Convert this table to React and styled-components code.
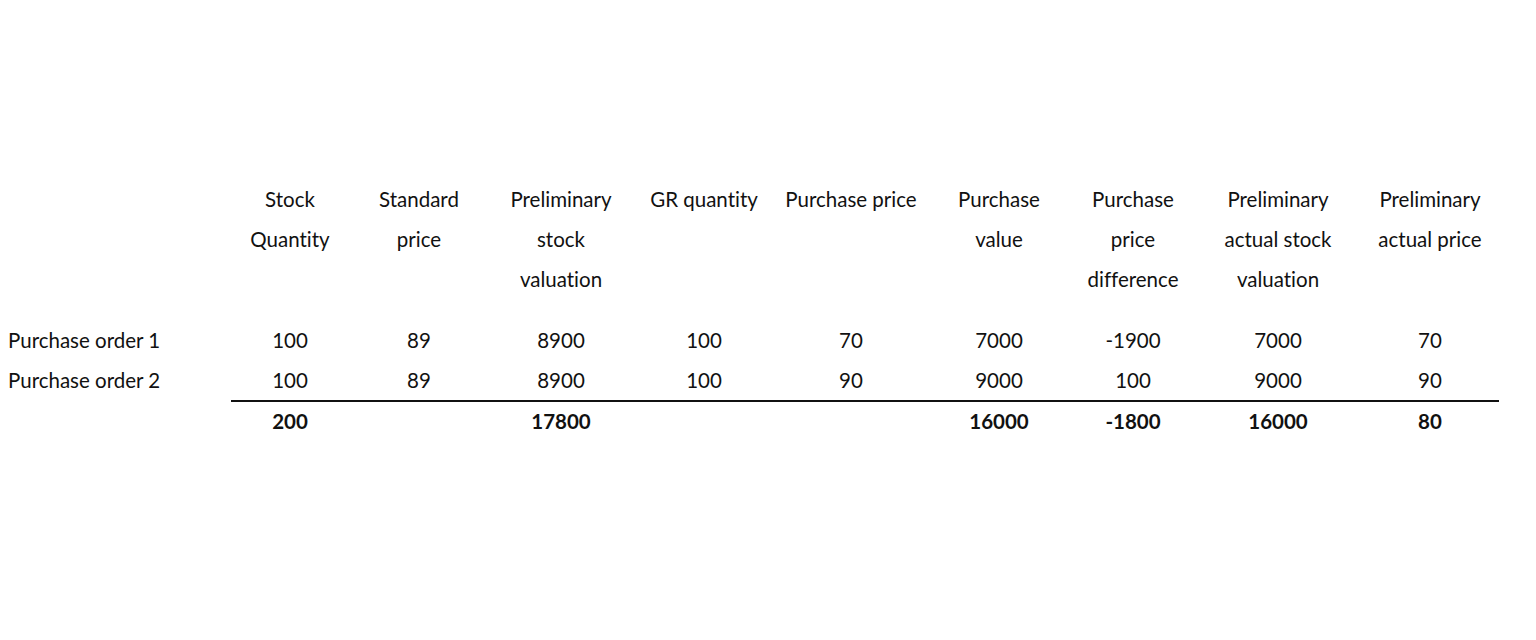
import React from 'react';
import styled, { createGlobalStyle } from 'styled-components';

const GlobalStyle = createGlobalStyle`
  html, body {
    margin: 0;
    padding: 0;
    background: #ffffff;
  }
  body {
    font-family: Lato, "Open Sans", sans-serif;
    color: #111111;
    font-variant-ligatures: none;
  }
`;

const Page = styled.div`
  width: 1536px;
  height: 640px;
  padding: 179px 0 0 8px;
  box-sizing: border-box;
`;

const Grid = styled.div`
  display: grid;
  grid-template-columns: 223px 118px 140px 144px 142px 152px 144px 124px 166px 138px;
  font-size: 20.5px;
  line-height: 40px;
`;

const HeadCell = styled.div`
  text-align: center;
  padding-bottom: 21px;
`;

const Label = styled.div`
  text-align: left;
  white-space: nowrap;
`;

const Cell = styled.div`
  text-align: center;
  font-weight: ${({ $bold }) => ($bold ? 700 : 400)};
  border-top: ${({ $rule }) => ($rule ? '2px solid #111111' : 'none')};
  line-height: ${({ $rule }) => ($rule ? '38px' : '40px')};
`;

const headers = [
  ['Stock', 'Quantity'],
  ['Standard', 'price'],
  ['Preliminary', 'stock', 'valuation'],
  ['GR quantity'],
  ['Purchase price'],
  ['Purchase', 'value'],
  ['Purchase', 'price', 'difference'],
  ['Preliminary', 'actual stock', 'valuation'],
  ['Preliminary', 'actual price'],
];

const rows = [
  ['Purchase order 1', '100', '89', '8900', '100', '70', '7000', '-1900', '7000', '70'],
  ['Purchase order 2', '100', '89', '8900', '100', '90', '9000', '100', '9000', '90'],
];

const totals = ['200', '', '17800', '', '', '16000', '-1800', '16000', '80'];

export default function App() {
  return (
    <>
      <GlobalStyle />
      <Page>
        <Grid>
          <Label />
          {headers.map((lines, i) => (
            <HeadCell key={i}>
              {lines.map((l, j) => (
                <div key={j}>{l}</div>
              ))}
            </HeadCell>
          ))}
          {rows.map((row, r) =>
            row.map((v, c) =>
              c === 0 ? <Label key={`${r}-${c}`}>{v}</Label> : <Cell key={`${r}-${c}`}>{v}</Cell>
            )
          )}
          <Label />
          {totals.map((v, i) => (
            <Cell key={i} $bold $rule>
              {v}
            </Cell>
          ))}
        </Grid>
      </Page>
    </>
  );
}
